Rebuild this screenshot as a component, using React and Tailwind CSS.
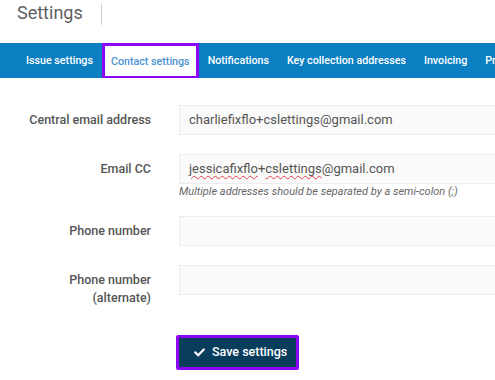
import React from "react";
import { FaCheck } from "react-icons/fa";

const tabs = ["Issue settings", "Contact settings", "Notifications", "Key collection addresses", "Invoicing", "Properties"];

function Row({ label, children }) {
  return (
    <div className="flex items-start">
      <div className="w-[151px] shrink-0 text-right pt-[6px] text-[12.5px] leading-[18px] font-medium text-[#555]">
        {label}
      </div>
      <div className="ml-[28px] flex-1 min-w-[330px]">{children}</div>
    </div>
  );
}

function Field({ children }) {
  return (
    <div className="h-[30px] border border-[#ececec] bg-[#fafafa] pl-[9px] flex items-center text-[13px] text-[#555] whitespace-nowrap">
      {children}
    </div>
  );
}

export default function App() {
  return (
    <div className="w-[495px] h-[380px] overflow-hidden bg-white" style={{ fontFamily: "Roboto, 'Liberation Sans', sans-serif" }}>
      <div className="h-[43px] flex items-start pl-[17px]">
        <div className="text-[18px] leading-[24px] pt-[1px] text-[#5f5f5f]">Settings</div>
        <div className="ml-[18px] mt-[4px] w-[1px] h-[21px] bg-[#cfcfcf]" />
      </div>
      <div className="h-[35px] bg-[#0c7fc3] flex items-start pl-[17px] whitespace-nowrap overflow-hidden">
        {tabs.map((t) =>
          t === "Contact settings" ? (
            <div key={t} className="relative z-10 h-[36px] border-[3px] border-[#8c06f5] bg-white px-[6px] pt-[2px] flex items-center text-[10.7px] font-medium text-[#4a93d2]">
              {t}
            </div>
          ) : (
            <div key={t} className="h-[35px] px-[9px] pt-[2px] flex items-center text-[10.7px] font-medium text-white">
              {t}
            </div>
          )
        )}
      </div>
      <div className="pt-[27px] flex flex-col">
        <Row label="Central email address">
          <Field>charliefixflo+cslettings@gmail.com</Field>
        </Row>
        <div className="h-[19px]" />
        <Row label="Email CC">
          <Field>
            <span className="underline decoration-wavy decoration-[#e53935] decoration-1 underline-offset-2">jessicafixflo</span>
            +
            <span className="underline decoration-wavy decoration-[#e53935] decoration-1 underline-offset-2">cslettings</span>
            @gmail.com
          </Field>
          <div className="text-[11px] italic text-[#666] leading-[14px] mt-[1px] whitespace-nowrap">
            Multiple addresses should be separated by a semi-colon (;)
          </div>
        </Row>
        <div className="h-[17px]" />
        <Row label="Phone number">
          <Field />
        </Row>
        <div className="h-[19px]" />
        <Row label={<>Phone number<br />(alternate)</>}>
          <Field />
        </Row>
        <div className="ml-[176px] mt-[28px]">
          <div className="inline-flex border-[3px] border-[#8c06f5] rounded-[2px]">
            <div className="h-[29px] w-[117px] bg-[#083d5c] flex items-center pl-[15px] text-white text-[12.5px] font-medium">
              <FaCheck className="w-[11px] h-[11px]" />
              <span className="ml-[7px]">Save settings</span>
            </div>
          </div>
        </div>
      </div>
    </div>
  );
}
